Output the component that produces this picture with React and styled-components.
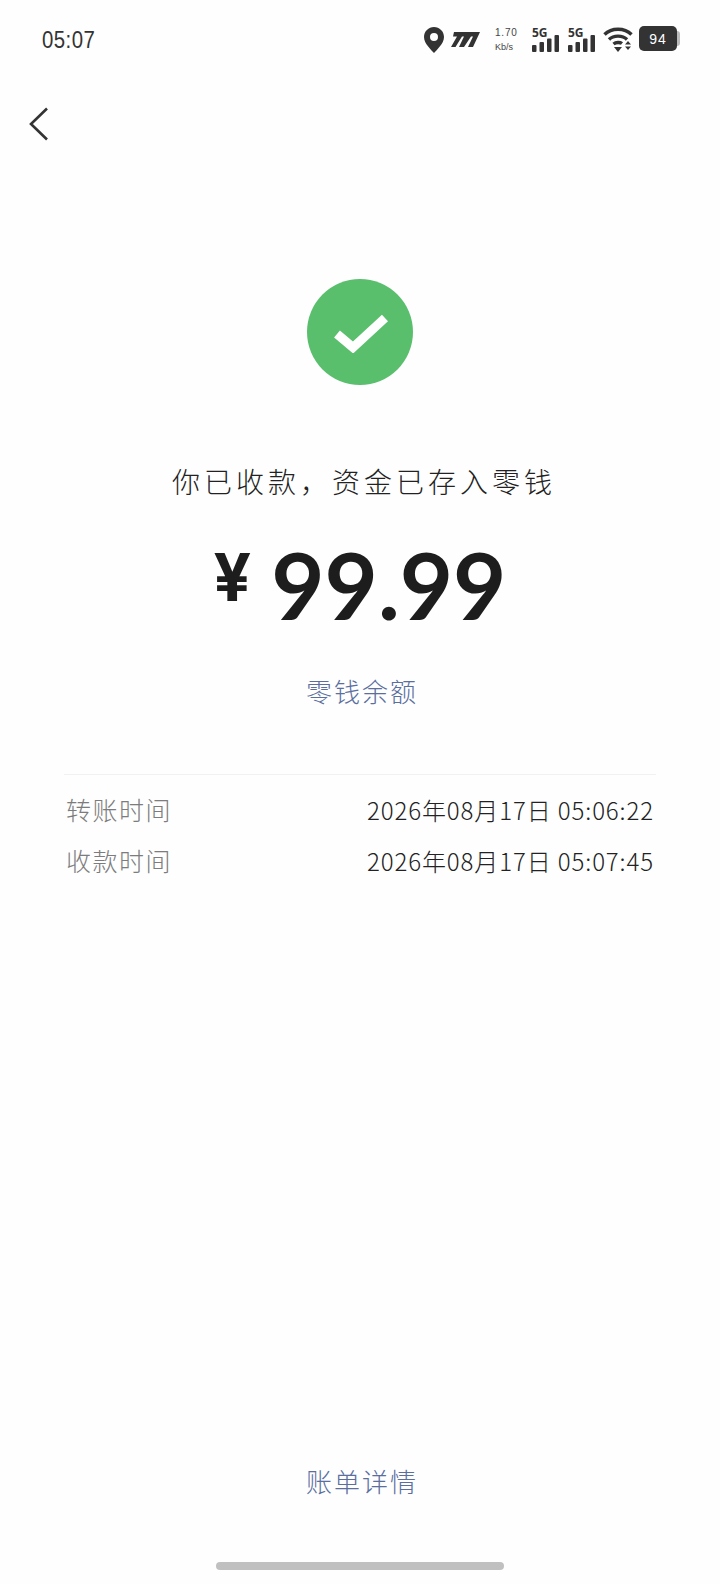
import React from 'react';
import styled, { createGlobalStyle } from 'styled-components';

const CJK = `'Noto Sans CJK SC', 'Noto Sans', sans-serif`;

const GlobalStyle = createGlobalStyle`
  html, body {
    margin: 0;
    padding: 0;
    background: #fefefe;
  }
  * {
    box-sizing: border-box;
  }
`;

function App() {
  return (
    <Page>
      <GlobalStyle />
      <StatusBar>
        <Clock>05:07</Clock>
        <StatusIcons>
          <PinIcon viewBox="0 0 20 26">
            <path
              fillRule="evenodd"
              d="M10 0C4.500 0 0 4.400 0 9.900 0 16.600 7.400 22.800 10 26c2.600-3.200 10-9.400 10-16.100C20 4.400 15.500 0 10 0zm0 6a4 4 0 1 1 0 8 4 4 0 0 1 0-8z"
              fill="#333"
            />
          </PinIcon>
          <LogoIcon viewBox="0 0 29 15">
            <path d="M3 0H29L22 15H17L22 4.500H20L13 15H8L13 4.500H11L4.500 15H0L6 4.500H2z" fill="#333" />
          </LogoIcon>
          <Speed>
            <SpeedValue>1.70</SpeedValue>
            <SpeedUnit>Kb/s</SpeedUnit>
          </Speed>
          <Signal />
          <Signal />
          <WifiIcon viewBox="0 0 30 26">
            <g fill="none" stroke="#333" strokeWidth="3.400">
              <path d="M1.500 8.500C8.500 1.500 21.500 1.500 28.500 8.500" />
              <path d="M6 13.500C10.500 9 19.500 9 24 13.500" />
              <path d="M10.500 18C13 16 17 16 19 17.500" />
            </g>
            <path d="M11 21h8L15 26z" fill="#333" />
            <path d="M22 18.500h6L25 15z M22 20.500h6L25 24z" fill="#333" />
          </WifiIcon>
          <Battery>
            <BatteryBody>94</BatteryBody>
            <BatteryCap />
          </Battery>
        </StatusIcons>
      </StatusBar>

      <BackButton>
        <svg width="20" height="34" viewBox="0 0 20 34" fill="none">
          <path d="M18 1.500L2 17L18 32.500" stroke="#333" strokeWidth="2.600" />
        </svg>
      </BackButton>

      <Result>
        <SuccessBadge>
          <svg width="56" height="42" viewBox="0 0 56 42" fill="none">
            <path d="M5 23L21 36.500L53 7" stroke="#fff" strokeWidth="9" />
          </svg>
        </SuccessBadge>
        <Title>你已收款，资金已存入零钱</Title>
        <Amount>
          <Currency>¥</Currency>
          <AmountValue>99.99</AmountValue>
        </Amount>
        <LinkText>零钱余额</LinkText>
      </Result>

      <Details>
        <DetailRow>
          <DetailLabel>转账时间</DetailLabel>
          <DetailValue>2026年08月17日 05:06:22</DetailValue>
        </DetailRow>
        <DetailRow>
          <DetailLabel>收款时间</DetailLabel>
          <DetailValue>2026年08月17日 05:07:45</DetailValue>
        </DetailRow>
      </Details>

      <Footer>
        <LinkText>账单详情</LinkText>
        <HomeIndicator />
      </Footer>
    </Page>
  );
}

function Signal() {
  return (
    <SignalWrap>
      <SignalLabel>5G</SignalLabel>
      <SignalBars viewBox="0 0 28 17">
        <rect x="0" y="10" width="4.500" height="7" rx="1" fill="#333" />
        <rect x="7.500" y="7" width="4.500" height="10" rx="1" fill="#333" />
        <rect x="15" y="3.500" width="4.500" height="13.500" rx="1" fill="#333" />
        <rect x="22.500" y="0" width="4.500" height="17" rx="1" fill="#333" />
      </SignalBars>
    </SignalWrap>
  );
}

const Page = styled.div`
  width: 720px;
  height: 1584px;
  display: flex;
  flex-direction: column;
  background: #fefefe;
  font-family: ${CJK};
  overflow: hidden;
`;

const StatusBar = styled.div`
  height: 80px;
  padding: 26px 40px 0 42px;
  display: flex;
  justify-content: space-between;
  align-items: flex-start;
`;

const Clock = styled.div`
  font-family: 'Liberation Sans', sans-serif;
  font-size: 24px;
  line-height: 28px;
  letter-spacing: 0.500px;
  color: #333;
  transform: scaleX(0.85);
  transform-origin: left center;
`;

const StatusIcons = styled.div`
  display: flex;
  align-items: flex-start;
`;

const PinIcon = styled.svg`
  width: 20px;
  height: 26px;
  margin-top: 1px;
`;

const LogoIcon = styled.svg`
  width: 29px;
  height: 15px;
  margin: 6px 0 0 7px;
`;

const Speed = styled.div`
  width: 24px;
  margin: 0 5px 0 15px;
  display: flex;
  flex-direction: column;
  font-family: 'Liberation Sans', sans-serif;
  color: #444;
`;

const SpeedValue = styled.span`
  font-size: 10px;
  line-height: 13px;
  letter-spacing: 0.8px;
`;

const SpeedUnit = styled.span`
  font-size: 9px;
  line-height: 11px;
  margin-top: 3px;
`;

const SignalWrap = styled.div`
  position: relative;
  width: 28px;
  height: 26px;
  margin-left: 8px;
  display: flex;
  align-items: flex-end;
`;

const SignalLabel = styled.span`
  position: absolute;
  top: 0;
  left: 0;
  font-family: 'Open Sans', sans-serif;
  font-size: 12px;
  line-height: 13px;
  font-weight: 700;
  color: #333;
`;

const SignalBars = styled.svg`
  width: 28px;
  height: 17px;
`;

const WifiIcon = styled.svg`
  width: 30px;
  height: 26px;
  margin-left: 7px;
`;

const Battery = styled.div`
  display: flex;
  align-items: center;
  margin-left: 6px;
`;

const BatteryBody = styled.div`
  width: 38px;
  height: 25px;
  border-radius: 5px;
  background: #333;
  color: #fff;
  font-family: 'Liberation Sans', sans-serif;
  font-size: 14px;
  letter-spacing: 1px;
  display: flex;
  align-items: center;
  justify-content: center;
`;

const BatteryCap = styled.div`
  width: 3px;
  height: 15px;
  border-radius: 0 3px 3px 0;
  background: #bbb;
`;

const BackButton = styled.div`
  margin: 27px 0 0 29px;
  height: 34px;
  display: flex;
`;

const Result = styled.div`
  margin-top: 138px;
  display: flex;
  flex-direction: column;
  align-items: center;
`;

const SuccessBadge = styled.div`
  width: 106px;
  height: 106px;
  border-radius: 50%;
  background: #5abf6d;
  display: flex;
  align-items: center;
  justify-content: center;
`;

const Title = styled.div`
  margin: 76px 0 0 8px;
  font-size: 28px;
  line-height: 40px;
  letter-spacing: 4px;
  font-weight: 300;
  color: #222;
`;

const Amount = styled.div`
  margin: 28px 0 32px;
  height: 112px;
  display: flex;
  align-items: flex-start;
  color: #1d1d1d;
`;

const Currency = styled.span`
  font-family: Inter, sans-serif;
  font-weight: 700;
  font-size: 66px;
  line-height: 96px;
  margin-right: 20px;
`;

const AmountValue = styled.span`
  font-family: Lato, sans-serif;
  font-weight: 700;
  font-size: 92px;
  line-height: 112px;
  letter-spacing: 0;
`;

const LinkText = styled.div`
  padding-left: 4px;
  font-size: 26px;
  line-height: 36px;
  letter-spacing: 2px;
  font-weight: 300;
  color: #5a6f9e;
  text-align: center;
`;

const Details = styled.div`
  margin: 65px 64px 0;
  padding-top: 16px;
  border-top: 1px solid #f1f1f1;
  display: flex;
  flex-direction: column;
  gap: 15px;
`;

const DetailRow = styled.div`
  display: flex;
  justify-content: space-between;
  align-items: center;
  height: 36px;
  padding: 0 2px;
`;

const DetailLabel = styled.span`
  font-size: 25px;
  letter-spacing: 1.500px;
  font-weight: 300;
  color: #7c7c7c;
`;

const DetailValue = styled.span`
  font-size: 24px;
  letter-spacing: 0.900px;
  font-weight: 300;
  color: #222;
`;

const Footer = styled.div`
  margin-top: auto;
  display: flex;
  flex-direction: column;
  align-items: center;
`;

const HomeIndicator = styled.div`
  width: 288px;
  height: 8px;
  margin: 63px 0 14px;
  border-radius: 4px;
  background: #c0c0c0;
`;

export default App;
